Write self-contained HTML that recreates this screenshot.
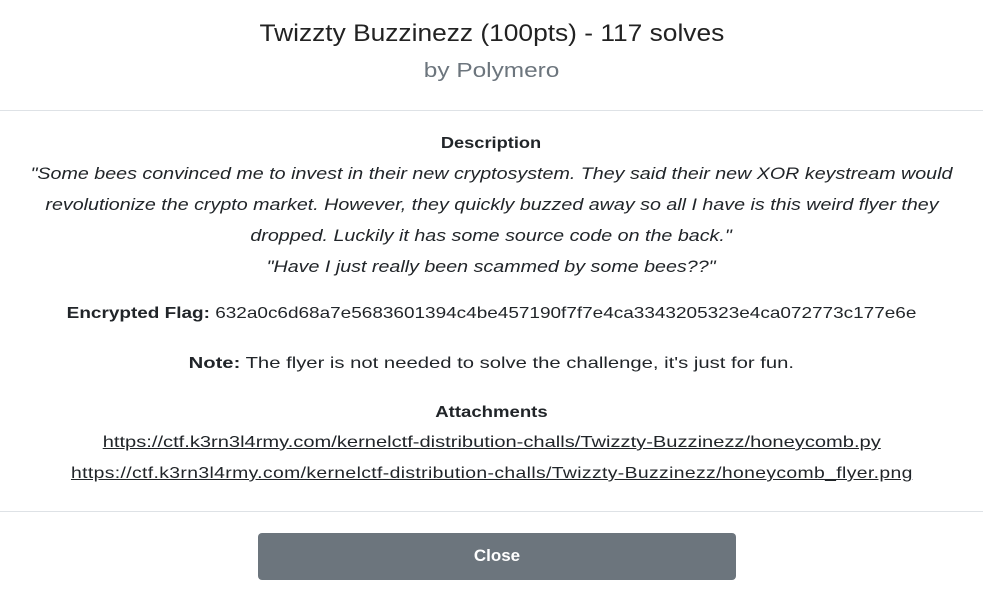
<!DOCTYPE html>
<html><head><meta charset="utf-8"><style>
body{margin:0;width:983px;height:589px;background:#fff;font-family:"Liberation Sans",sans-serif;color:#212529;position:relative;overflow:hidden}
.l{position:absolute;left:0;width:983px;text-align:center;white-space:nowrap}
.l span{display:inline-block;transform-origin:center}
.hr{position:absolute;left:0;width:983px;height:1px;background:#dee2e6}
a{color:#212529;text-decoration:underline}
.btn{position:absolute;left:258px;top:533px;width:478px;height:47px;background:#6c757d;border-radius:4px;color:#fff;font-weight:bold;font-size:17px;text-align:center;line-height:45px}
</style></head><body>
<div class="l" style="top:20px;font-size:24px;color:#222"><span style="transform:scaleX(1.097)">Twizzty Buzzinezz (100pts) - 117 solves</span></div>
<div class="l" style="top:60px;font-size:20px;color:#6c757d"><span style="transform:scaleX(1.22)">by Polymero</span></div>
<div class="hr" style="top:110px"></div>
<div class="l" style="top:135px;font-size:16px;font-weight:bold"><span style="transform:scaleX(1.14)">Description</span></div>
<div class="l" style="top:164px;font-size:17px;font-style:italic"><span style="transform:scaleX(1.157)">"Some bees convinced me to invest in their new cryptosystem. They said their new XOR keystream would</span></div>
<div class="l" style="top:195px;font-size:17px;font-style:italic"><span style="transform:scaleX(1.157)">revolutionize the crypto market. However, they quickly buzzed away so all I have is this weird flyer they</span></div>
<div class="l" style="top:226px;font-size:17px;font-style:italic"><span style="transform:scaleX(1.157)">dropped. Luckily it has some source code on the back."</span></div>
<div class="l" style="top:257px;font-size:17px;font-style:italic"><span style="transform:scaleX(1.157)">"Have I just really been scammed by some bees??"</span></div>
<div class="l" style="top:305px;font-size:16px"><span style="transform:scaleX(1.185)"><b>Encrypted Flag:</b> 632a0c6d68a7e5683601394c4be457190f7f7e4ca3343205323e4ca072773c177e6e</span></div>
<div class="l" style="top:355px;font-size:16px"><span style="transform:scaleX(1.265)"><b>Note:</b> The flyer is not needed to solve the challenge, it's just for fun.</span></div>
<div class="l" style="top:404px;font-size:16px;font-weight:bold"><span style="transform:scaleX(1.16)">Attachments</span></div>
<div class="l" style="top:434px;font-size:16px"><span style="transform:scaleX(1.256)"><a>https://ctf.k3rn3l4rmy.com/kernelctf-distribution-challs/Twizzty-Buzzinezz/honeycomb.py</a></span></div>
<div class="l" style="top:465px;font-size:16px;letter-spacing:0.3px"><span style="transform:scaleX(1.21)"><a>https://ctf.k3rn3l4rmy.com/kernelctf-distribution-challs/Twizzty-Buzzinezz/honeycomb_flyer.png</a></span></div>
<div class="hr" style="top:511px"></div>
<div class="btn">Close</div>
</body></html>
